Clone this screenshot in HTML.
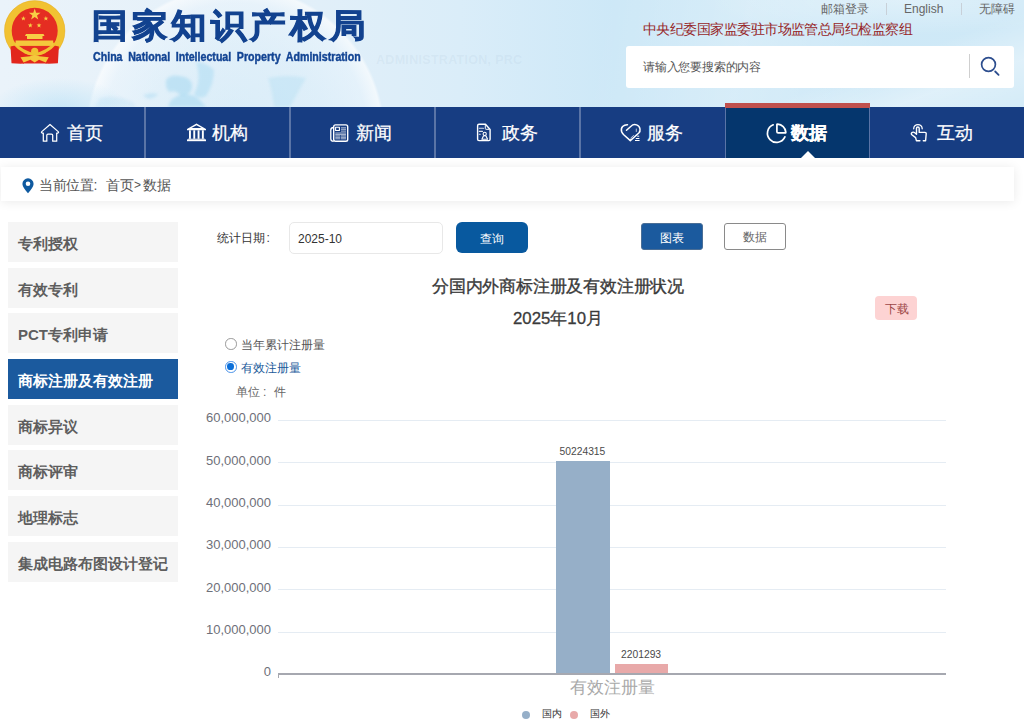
<!DOCTYPE html>
<html><head><meta charset="utf-8">
<style>
*{margin:0;padding:0;box-sizing:border-box}
html,body{width:1024px;height:726px;overflow:hidden;background:#fff;font-family:"Liberation Sans",sans-serif;color:#333}
.a{position:absolute;white-space:nowrap}
#hdr{position:absolute;left:0;top:0;width:1024px;height:107px;overflow:hidden;
 background:
  radial-gradient(ellipse 70px 32px at 60px 110px, rgba(170,220,245,0.55), rgba(170,220,245,0)),
  radial-gradient(circle 150px at 235px 135px, rgba(190,228,247,0.3) 0%, rgba(215,238,250,0.3) 60%, rgba(236,246,253,0.4) 88%, rgba(255,255,255,0.6) 98%, rgba(255,255,255,0) 100%),
  radial-gradient(ellipse 200px 35px at 900px 0px, rgba(255,255,255,0.35), rgba(255,255,255,0)),
  linear-gradient(160deg, rgba(255,255,255,0) 80%, rgba(255,255,255,0.35) 90%, rgba(255,255,255,0.1) 100%),
  linear-gradient(100deg, rgba(255,255,255,0) 58%, rgba(255,255,255,0.2) 72%, rgba(255,255,255,0) 86%),
  linear-gradient(90deg,#eaf3fa 0%,#e4f0f9 25%,#daedf9 45%,#cde8f7 60%,#cfe9f7 100%)}
#nav{position:absolute;left:0;top:107px;width:1024px;height:51px;background:#173d82}
.ni{position:absolute;top:1px;height:51px;color:#fff;font-size:18px;line-height:51px;-webkit-text-stroke:0.25px #fff}
.sep{position:absolute;top:0;width:2px;height:51px;background:#5a74a6}
#crumb{position:absolute;left:1px;top:167px;width:1013px;height:34px;background:#fff;box-shadow:0 1px 10px rgba(0,0,0,0.085)}
.side{position:absolute;left:8px;width:169.5px;height:40px;background:#f5f5f5;font-size:15px;font-weight:bold;color:#5e5e5e;line-height:43px;padding-left:10px}
.side.on{background:#1b5a9e;color:#fff}
.yl{position:absolute;left:190px;width:81px;text-align:right;font-size:13px;color:#6e7079;line-height:14px}
.gl{position:absolute;left:278px;width:668px;height:1px;background:#e5ecf3}
</style></head><body>
<div id="hdr">
  <svg class="a" style="left:0;top:0" width="1024" height="107" viewBox="0 0 1024 107">
    <defs><filter id="bl" x="-20%" y="-20%" width="140%" height="140%"><feGaussianBlur stdDeviation="1.6"/></filter></defs>
    <g filter="url(#bl)" fill="#92d1ef" opacity="0.7">
      <path d="M166 80 Q170 74 180 76 Q190 77 192 84 Q193 92 186 95 Q181 97 178 93 Q174 90 170 92 Q165 90 166 80 Z" opacity="0.6"/>
      <path d="M168 107 Q170 98 180 95 Q188 93 194 96 Q200 99 206 107 Z" opacity="0.6"/>
      <path d="M196 62 Q206 62 214 70 Q214 84 206 96 Q198 100 194 94 Q202 80 196 62 Z" opacity="0.5"/>
      <path d="M143 95 Q150 92 158 94 Q156 98 148 99 Z" opacity="0.45"/>
      <path d="M268 78 Q288 74 306 78 Q298 92 290 107 L274 107 Q272 90 268 78 Z" opacity="0.35"/>
      <path d="M100 98 Q120 94 135 104 L135 107 L95 107 Z" opacity="0.25"/>
    </g>
  </svg>
  <!-- emblem -->
  <svg class="a" style="left:0;top:0" width="70" height="66" viewBox="0 0 70 66">
    <circle cx="34.7" cy="30.8" r="26.65" fill="#e52d22" stroke="#f1c232" stroke-width="7.3"/>
    <circle cx="34.7" cy="30.8" r="30.2" fill="none" stroke="#e5ac25" stroke-width="0.5"/>
    <path d="M10.5 46.5 Q14 46 17.5 44.5 L23.5 51 L24 63.6 Q17 63.8 11.5 63.2 Z" fill="#e2261c"/>
    <path d="M58.9 46.5 Q55.4 46 51.9 44.5 L45.9 51 L45.4 63.6 Q52.4 63.8 57.9 63.2 Z" fill="#e2261c"/>
    <path d="M20 51 Q34.7 60 49.4 51 L46.5 63.6 L22.9 63.6 Z" fill="#e2261c"/>
    <path d="M14.5 43.5 Q22 52.5 34.7 54.6 Q47.4 52.5 54.9 43.5" fill="none" stroke="#f1c232" stroke-width="3"/>
    <polygon points="34.7,8.6 36.1,12.8 40.5,12.8 37,15.4 38.3,19.6 34.7,17 31.1,19.6 32.4,15.4 28.9,12.8 33.3,12.8" fill="#f7cf45"/>
    <polygon points="23.4,16 24,17.7 25.8,17.7 24.4,18.8 24.9,20.6 23.4,19.5 21.9,20.6 22.4,18.8 21,17.7 22.8,17.7" fill="#f7cf45"/>
    <polygon points="45.9,16 46.5,17.7 48.3,17.7 46.9,18.8 47.4,20.6 45.9,19.5 44.4,20.6 44.9,18.8 43.5,17.7 45.3,17.7" fill="#f7cf45"/>
    <polygon points="30.3,22.9 30.9,24.6 32.7,24.6 31.3,25.7 31.8,27.5 30.3,26.4 28.8,27.5 29.3,25.7 27.9,24.6 29.7,24.6" fill="#f7cf45"/>
    <polygon points="39,22.9 39.6,24.6 41.4,24.6 40,25.7 40.5,27.5 39,26.4 37.5,27.5 38,25.7 36.6,24.6 38.4,24.6" fill="#f7cf45"/>
    <path d="M26 34 H43.5 L44.5 36 H42.5 V39 H27 V36 H25 Z" fill="#f7cf45"/>
    <rect x="15.6" y="40.5" width="37.6" height="5.4" fill="#f4c83c"/>
    <circle cx="34.7" cy="51.3" r="3.6" fill="#f1c232"/>
    <path d="M20.5 57.3 L30 56.3 L34.7 55 L39.4 56.3 L48.8 57.3 L45.8 62.4 L39 59.8 L34.7 62.4 L30.4 59.8 L23.6 62.4 Z" fill="#f4c83c"/>
  </svg>
  <div class="a" style="left:92px;top:5px;font-size:35px;font-weight:bold;color:#12428f;letter-spacing:4.6px;line-height:44px;-webkit-text-stroke:1.1px #12428f;transform-origin:0 0;transform:scaleY(0.93)">国家知识产权局</div>
  <div class="a" style="left:93px;top:50px;font-size:12px;font-weight:bold;color:#134594;line-height:14px;transform-origin:0 0;transform:scaleX(0.886);word-spacing:3px;-webkit-text-stroke:0.45px #134594;text-shadow:0 0 2px rgba(255,255,255,0.8)">China National Intellectual Property Administration</div>
  <div class="a" style="left:376px;top:54px;font-size:12.5px;font-weight:bold;color:rgba(140,165,195,0.1);line-height:13px;letter-spacing:0.3px">ADMINISTRATION, PRC</div>
  <div class="a" style="left:821px;top:2px;font-size:12px;color:#666;line-height:14px">邮箱登录</div>
  <div class="a" style="left:886px;top:3px;width:1px;height:12px;background:#c8d0d8"></div>
  <div class="a" style="left:904px;top:2px;font-size:12px;color:#666;line-height:14px">English</div>
  <div class="a" style="left:961px;top:3px;width:1px;height:12px;background:#c8d0d8"></div>
  <div class="a" style="left:979px;top:2px;font-size:12px;color:#666;line-height:14px">无障碍</div>
  <div class="a" style="left:643px;top:21px;font-size:14px;letter-spacing:-0.55px;color:#962628;line-height:16px">中央纪委国家监委驻市场监管总局纪检监察组</div>
  <div class="a" style="left:626px;top:46px;width:388px;height:42px;background:#fff;border-radius:3px"></div>
  <div class="a" style="left:643px;top:60px;font-size:12px;letter-spacing:-0.2px;color:#555;line-height:14px">请输入您要搜索的内容</div>
  <div class="a" style="left:969px;top:54px;width:1px;height:24px;background:#cfcfcf"></div>
  <svg class="a" style="left:978px;top:55px" width="24" height="24" viewBox="0 0 24 24">
    <circle cx="10.5" cy="9.5" r="6.9" fill="none" stroke="#2c4d8e" stroke-width="1.7"/>
    <line x1="17.2" y1="16.5" x2="20.6" y2="19.8" stroke="#2c4d8e" stroke-width="1.8" stroke-linecap="round"/>
  </svg>
</div>

<div id="nav">
  <div class="sep" style="left:144px"></div>
  <div class="sep" style="left:289px"></div>
  <div class="sep" style="left:434px"></div>
  <div class="sep" style="left:579px"></div>
  <div class="a" style="left:725px;top:-4px;width:145px;height:55px;background:#05366d;border-left:1px solid #5a74a6;border-right:1px solid #5a74a6"></div>
  <div class="a" style="left:725px;top:-4px;width:145px;height:4.5px;background:#c0504d"></div>
  <svg class="a" style="left:0;top:0" width="1024" height="51" viewBox="0 107 1024 51">
  <g fill="none" stroke="#fff" stroke-width="1.4" stroke-linejoin="round" stroke-linecap="round">
    <path stroke-width="1.25" d="M43.3 141.2 V133 H42 Q41 132.6 41.8 131.6 L50 124.5 L58.2 131.6 Q59 132.6 58 133 H56.7 V141.2 H52.7 V135.2 Q52.7 134 51.5 134 H48 Q46.8 134 46.8 135.2 V141.2 Z"/>
  </g>
  <g fill="#fff">
    <path fill-rule="evenodd" d="M187 129 L196.5 123.4 L206 129 V130.3 H187 Z M191.5 128.1 L196.5 125.3 L201.5 128.1 Z"/>
    <rect x="189" y="130.3" width="1.9" height="8.5"/><rect x="193.3" y="130.3" width="1.9" height="8.5"/>
    <rect x="197.6" y="130.3" width="1.9" height="8.5"/><rect x="201.9" y="130.3" width="1.9" height="8.5"/>
    <rect x="188" y="138.6" width="17" height="1" opacity="0.7"/>
    <rect x="187" y="139.4" width="19" height="1.8"/>
  </g>
  <g fill="none" stroke="#fff" stroke-linejoin="round">
    <rect x="333.7" y="124.9" width="14" height="16.4" rx="1.8" stroke-width="1.4"/>
    <path d="M333.7 127.5 Q330.8 127.5 330.8 130 V139 Q330.8 141.3 333.7 141.3" stroke-width="1.3"/>
    <rect x="335.6" y="127.3" width="3.8" height="3.2" stroke-width="1.1"/>
    <g stroke-width="0.9" opacity="0.75"><path d="M341 127.8h5M341 129.3h5M341 131.1h5M335.3 133h10.7M335.3 134.4h10.7M335.3 135.9h5M341 135.9h5M335.3 137.3h5M341 137.3h5M335.3 138.8h5M341 138.8h5"/></g>
  </g>
  <g fill="none" stroke="#fff" stroke-linejoin="round" stroke-linecap="round">
    <path d="M485.5 124.3 H479 Q477.6 124.3 477.6 125.7 V139.3 Q477.6 140.6 479 140.6 H488.8 Q490.1 140.6 490.1 139.3 V129.5 Z" stroke-width="1.4"/>
    <path d="M485.3 125.5 V128.5 Q485.3 129.3 486.1 129.3 H489" stroke-width="1"/>
    <path d="M479.3 128.2h4.2M479.3 131.4h3.2M479.3 134.3h1" stroke-width="1.1" opacity="0.85"/>
    <circle cx="484.7" cy="133.9" r="1.6" stroke-width="1.1"/>
    <path d="M481.9 139.2 L483.4 136 Q484.7 135.5 486 136 L487.6 139.2 Z" stroke-width="1.1"/>
  </g>
  <g fill="none" stroke="#fff" stroke-linecap="round" stroke-linejoin="round">
    <path d="M627.5 124.7 Q624.5 124.6 622.6 126.5 Q620.6 128.8 621.7 131.9 Q622.5 133.6 624 135 L630.3 140.6 L638.8 133 Q640.4 131.4 640 129 Q639.5 126 636.6 124.9 Q633.4 123.8 631 126.2 L626.5 130.3" stroke-width="1.5"/>
    <path d="M636.3 129 V131.5 M633.5 135.5 L630.8 138" stroke-width="1" opacity="0.7"/>
    <path d="M637.6 136.2h1.2M636.2 138.5h2.8M635.4 140.5h3.8" stroke-width="1"/>
  </g>
  <g fill="none" stroke="#fff" stroke-width="1.7" stroke-linejoin="round" stroke-linecap="round">
    <path d="M773.2 124.8 A9.1 9.1 0 1 0 784.9 136.9"/>
    <path d="M776.9 124.3 V131.7 Q776.9 132.9 778.1 132.9 H785.3 Q785.9 132.9 785.8 132.1 A8.7 8.7 0 0 0 777.7 124.2 Q776.9 124.2 776.9 124.3 Z"/>
  </g>
  <g fill="none" stroke="#fff" stroke-width="1.4" stroke-linejoin="round" stroke-linecap="round">
    <path d="M913.7 128.8 A4.2 4.2 0 0 1 922.2 128.8" stroke-width="1.3"/>
    <path d="M916.5 134.2 V128.3 A1.3 1.3 0 0 1 919.2 128.3 V132.4 H924.9 Q926.3 132.4 926.2 133.8 L925.6 140.7 H923.3 M919.9 140.7 H916.4 L915.6 137.6 L911.8 134.8 Q910.6 133.4 912.3 132.3 Q913.6 131.7 914.8 132.8 L916.5 134.2"/>
  </g>
</svg>
<div class="a" style="left:801px;top:44px;width:0;height:0;border-left:7px solid transparent;border-right:7px solid transparent;border-bottom:7px solid #fff"></div>

  <div class="ni" style="left:41px">
    
    <span class="a" style="left:25.8px;top:0">首页</span>
  </div>
  <div class="ni" style="left:187px">
    
    <span class="a" style="left:24.5px;top:0">机构</span>
  </div>
  <div class="ni" style="left:330px">
    
    <span class="a" style="left:26px;top:0">新闻</span>
  </div>
  <div class="ni" style="left:476px">
    
    <span class="a" style="left:25.5px;top:0">政务</span>
  </div>
  <div class="ni" style="left:621px">
    
    <span class="a" style="left:25.8px;top:0">服务</span>
  </div>
  <div class="ni" style="left:766px;font-weight:bold">
    
    <span class="a" style="left:25.4px;top:0">数据</span>
  </div>
  <div class="ni" style="left:911px">
    
    <span class="a" style="left:26px;top:0">互动</span>
  </div>
</div>

<div id="crumb">
  <svg class="a" style="left:20.5px;top:11px" width="12" height="16" viewBox="0 0 12 16"><path d="M6 0.3 A5.6 5.6 0 0 1 11.6 5.9 C11.6 8.6 9 11.5 6 15.3 C3 11.5 0.4 8.6 0.4 5.9 A5.6 5.6 0 0 1 6 0.3 Z M6 3.4 A2.3 2.3 0 1 0 6 8 A2.3 2.3 0 1 0 6 3.4 Z" fill="#0f5aa0" fill-rule="evenodd"/></svg>
  <div class="a" style="left:38px;top:10px;font-size:14px;letter-spacing:-0.3px;color:#555;line-height:16px">当前位置</div>
  <div class="a" style="left:92.5px;top:10px;font-size:14px;color:#555;line-height:16px">:</div>
  <div class="a" style="left:105px;top:10px;font-size:14px;letter-spacing:-0.3px;color:#555;line-height:16px">首页</div>
  <div class="a" style="left:133px;top:10px;font-size:12px;color:#555;line-height:16px">&gt;</div>
  <div class="a" style="left:142px;top:10px;font-size:14px;letter-spacing:-0.3px;color:#555;line-height:16px">数据</div>
</div>

<div class="side" style="top:222.00px">专利授权</div>
<div class="side" style="top:267.66px">有效专利</div>
<div class="side" style="top:313.32px">PCT专利申请</div>
<div class="side on" style="top:358.98px">商标注册及有效注册</div>
<div class="side" style="top:404.64px">商标异议</div>
<div class="side" style="top:450.30px">商标评审</div>
<div class="side" style="top:495.96px">地理标志</div>
<div class="side" style="top:541.62px">集成电路布图设计登记</div>

<div class="a" style="left:217px;top:230px;font-size:12px;color:#333;line-height:16px">统计日期</div><div class="a" style="left:266.5px;top:230px;font-size:12px;color:#333;line-height:16px">:</div>
<div class="a" style="left:289px;top:222px;width:154px;height:32px;border:1px solid #e8e8e8;border-radius:5px"></div>
<div class="a" style="left:298px;top:230.5px;font-size:12px;color:#333;line-height:16px">2025-10</div>
<div class="a" style="left:456px;top:222px;width:72px;height:31px;background:#08599f;border-radius:6px;color:#fff;font-size:12px;line-height:35px;text-align:center">查询</div>
<div class="a" style="left:641px;top:223px;width:62px;height:27px;background:#1b5a9e;border:1px solid #4a6e96;border-radius:3px;color:#fff;font-size:12px;line-height:28px;text-align:center">图表</div>
<div class="a" style="left:724px;top:223px;width:62px;height:27px;background:#fff;border:1.5px solid #8a8a8a;border-radius:3px;color:#666;font-size:12px;line-height:27px;text-align:center">数据</div>

<div class="a" style="left:432px;top:276px;font-size:17px;letter-spacing:-0.2px;color:#3a3a3a;-webkit-text-stroke:0.35px #3a3a3a;line-height:22px">分国内外商标注册及有效注册状况</div>
<div class="a" style="left:513px;top:308px;font-size:16.8px;color:#3a3a3a;-webkit-text-stroke:0.3px #3a3a3a;line-height:22px">2025年10月</div>
<div class="a" style="left:875px;top:296px;width:42px;height:24px;background:#fdd3d3;border-radius:4px;color:#9c4646;font-size:12px;letter-spacing:-0.5px;padding-left:1px;line-height:26px;text-align:center">下载</div>

<div class="a" style="left:225px;top:338px;width:11.5px;height:11.5px;border:1.3px solid #999;border-radius:50%;background:#fff"></div>
<div class="a" style="left:241px;top:338px;font-size:12px;color:#555;line-height:15px">当年累计注册量</div>
<div class="a" style="left:225px;top:361px;width:11.5px;height:11.5px;border:1.8px solid #4a92e8;border-radius:50%;background:#fff"></div>
<div class="a" style="left:227.4px;top:363.4px;width:6.7px;height:6.7px;border-radius:50%;background:#0b6fd9"></div>
<div class="a" style="left:241px;top:361px;font-size:12px;color:#1a5a9a;line-height:15px">有效注册量</div>
<div class="a" style="left:236px;top:385px;font-size:12px;color:#666;line-height:15px">单位</div><div class="a" style="left:263px;top:385px;font-size:12px;color:#666;line-height:15px">:</div><div class="a" style="left:274px;top:385px;font-size:12px;color:#666;line-height:15px">件</div>

<!-- chart -->
<div class="gl" style="top:420px"></div>
<div class="gl" style="top:462px"></div>
<div class="gl" style="top:505px"></div>
<div class="gl" style="top:547px"></div>
<div class="gl" style="top:589px"></div>
<div class="gl" style="top:632px"></div>
<div class="yl" style="top:411.4px">60,000,000</div>
<div class="yl" style="top:453.7px">50,000,000</div>
<div class="yl" style="top:496.0px">40,000,000</div>
<div class="yl" style="top:538.2px">30,000,000</div>
<div class="yl" style="top:580.5px">20,000,000</div>
<div class="yl" style="top:622.8px">10,000,000</div>
<div class="yl" style="top:665.1px">0</div>
<div class="a" style="left:556px;top:461px;width:53.5px;height:213px;background:#96afc8"></div>
<div class="a" style="left:615px;top:664px;width:53px;height:10px;background:#e8a9a9"></div>
<div class="a" style="left:278px;top:673px;width:668px;height:1.5px;background:#a6a8b0"></div>
<div class="a" style="left:278px;top:673px;width:1px;height:5px;background:#a6a8b0"></div>
<div class="a" style="left:559.5px;top:445.5px;font-size:10.3px;color:#4a4a4a;line-height:12px">50224315</div>
<div class="a" style="left:621px;top:649px;font-size:10.3px;color:#4a4a4a;line-height:12px">2201293</div>
<div class="a" style="left:569.5px;top:678px;font-size:17px;color:#aaa;line-height:20px">有效注册量</div>
<div class="a" style="left:522px;top:711px;width:8px;height:8px;border-radius:50%;background:#96afc8"></div>
<div class="a" style="left:541.5px;top:708px;font-size:10px;color:#333;line-height:12px">国内</div>
<div class="a" style="left:570px;top:711px;width:8px;height:8px;border-radius:50%;background:#e8a9a9"></div>
<div class="a" style="left:589.5px;top:708px;font-size:10px;color:#333;line-height:12px">国外</div>
</body></html>
